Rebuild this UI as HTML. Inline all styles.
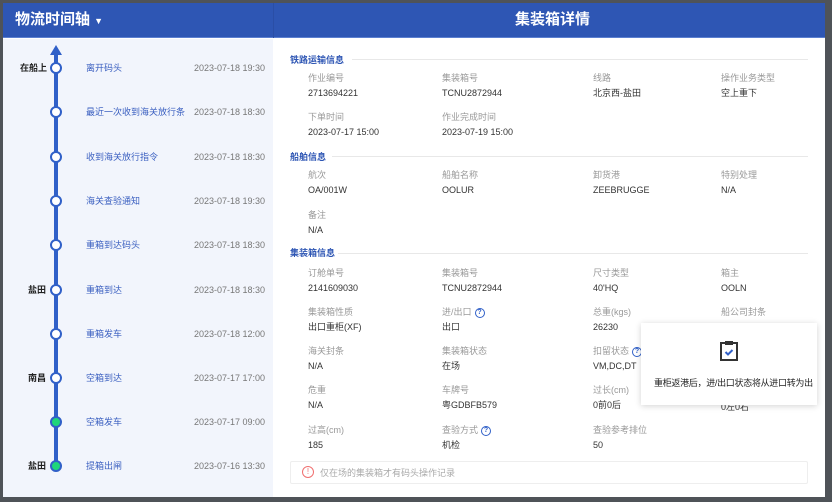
<!DOCTYPE html>
<html><head><meta charset="utf-8"><style>
*{margin:0;padding:0;box-sizing:border-box}
body{width:832px;height:502px;background:#4f5358;font-family:"Liberation Sans","Noto Sans CJK SC",sans-serif;position:relative;overflow:hidden}
.modal{position:absolute;left:3px;top:3px;width:822px;height:494px;background:#fff}
.hdr{position:absolute;left:0;top:0;width:822px;height:35px;background:#2e56b4;border-bottom:1px solid #5b7fd0}
.hdr .l{position:absolute;left:12px;top:8px;color:#fff;font-size:15px;font-weight:bold;line-height:18px}
.hdr .r{position:absolute;left:512px;top:8px;color:#fff;font-size:15px;font-weight:bold;line-height:18px}
.hdr .sep{position:absolute;left:270px;top:0;width:1px;height:35px;background:#2a4ea6}
.left{position:absolute;left:0;top:36px;width:270px;height:458px;background:#f2f5fc}
.abs{position:absolute;white-space:nowrap;line-height:12px}
.tl{font-size:9px;color:#3a5fc0}
.dt{font-size:9px;color:#777}
.pl{font-size:9px;color:#222;font-weight:bold}
.node{position:absolute;width:12px;height:12px;border-radius:50%;border:2px solid #3060c8;background:#fff}
.node.g{background:#1fd67a}
.sec{font-size:9px;color:#2e56b4;font-weight:bold}
.line{position:absolute;height:1px;background:#e8e8e8}
.lb{font-size:9px;color:#999}
.vl{font-size:9px;color:#333}
.q{display:inline-block;width:10px;height:10px;border:1.3px solid #3060c8;border-radius:50%;font-size:7px;line-height:8px;text-align:center;color:#3060c8;vertical-align:middle;margin-left:3px;font-weight:bold}
</style></head><body>
<div class="modal">
<div class="hdr"><div class="l">物流时间轴 <span style="font-size:9px">▼</span></div><div class="sep"></div><div class="r">集装箱详情</div></div>
<div class="left"></div>
</div>
<div class="abs" style="left:54px;top:52px;width:4px;height:414px;background:#3060c8"></div>
<div class="abs" style="left:50px;top:45px;width:0;height:0;border-left:6px solid transparent;border-right:6px solid transparent;border-bottom:10px solid #3060c8"></div>

<div class="node" style="left:50px;top:62px"></div>
<div class="node" style="left:50px;top:106px"></div>
<div class="node" style="left:50px;top:151px"></div>
<div class="node" style="left:50px;top:195px"></div>
<div class="node" style="left:50px;top:239px"></div>
<div class="node" style="left:50px;top:284px"></div>
<div class="node" style="left:50px;top:328px"></div>
<div class="node" style="left:50px;top:372px"></div>
<div class="node g" style="left:50px;top:416px"></div>
<div class="node g" style="left:50px;top:460px"></div>

<div class="abs pl" style="left:20px;top:62px">在船上</div>
<div class="abs pl" style="left:28px;top:284px">盐田</div>
<div class="abs pl" style="left:28px;top:372px">南昌</div>
<div class="abs pl" style="left:28px;top:460px">盐田</div>

<div class="abs tl" style="left:86px;top:62px">离开码头</div><div class="abs dt" style="left:194px;top:62px">2023-07-18 19:30</div>
<div class="abs tl" style="left:86px;top:106px">最近一次收到海关放行条</div><div class="abs dt" style="left:194px;top:106px">2023-07-18 18:30</div>
<div class="abs tl" style="left:86px;top:151px">收到海关放行指令</div><div class="abs dt" style="left:194px;top:151px">2023-07-18 18:30</div>
<div class="abs tl" style="left:86px;top:195px">海关查验通知</div><div class="abs dt" style="left:194px;top:195px">2023-07-18 19:30</div>
<div class="abs tl" style="left:86px;top:239px">重箱到达码头</div><div class="abs dt" style="left:194px;top:239px">2023-07-18 18:30</div>
<div class="abs tl" style="left:86px;top:284px">重箱到达</div><div class="abs dt" style="left:194px;top:284px">2023-07-18 18:30</div>
<div class="abs tl" style="left:86px;top:328px">重箱发车</div><div class="abs dt" style="left:194px;top:328px">2023-07-18 12:00</div>
<div class="abs tl" style="left:86px;top:372px">空箱到达</div><div class="abs dt" style="left:194px;top:372px">2023-07-17 17:00</div>
<div class="abs tl" style="left:86px;top:416px">空箱发车</div><div class="abs dt" style="left:194px;top:416px">2023-07-17 09:00</div>
<div class="abs tl" style="left:86px;top:460px">提箱出闸</div><div class="abs dt" style="left:194px;top:460px">2023-07-16 13:30</div>

<div class="abs sec" style="left:290px;top:54px">铁路运输信息</div><div class="line" style="left:352px;top:59px;width:456px"></div>
<div class="abs lb" style="left:308px;top:72px">作业编号</div><div class="abs vl" style="left:308px;top:87px">2713694221</div>
<div class="abs lb" style="left:442px;top:72px">集装箱号</div><div class="abs vl" style="left:442px;top:87px">TCNU2872944</div>
<div class="abs lb" style="left:593px;top:72px">线路</div><div class="abs vl" style="left:593px;top:87px">北京西-盐田</div>
<div class="abs lb" style="left:721px;top:72px">操作业务类型</div><div class="abs vl" style="left:721px;top:87px">空上重下</div>
<div class="abs lb" style="left:308px;top:111px">下单时间</div><div class="abs vl" style="left:308px;top:126px">2023-07-17 15:00</div>
<div class="abs lb" style="left:442px;top:111px">作业完成时间</div><div class="abs vl" style="left:442px;top:126px">2023-07-19 15:00</div>

<div class="abs sec" style="left:290px;top:151px">船舶信息</div><div class="line" style="left:332px;top:156px;width:476px"></div>
<div class="abs lb" style="left:308px;top:169px">航次</div><div class="abs vl" style="left:308px;top:184px">OA/001W</div>
<div class="abs lb" style="left:442px;top:169px">船舶名称</div><div class="abs vl" style="left:442px;top:184px">OOLUR</div>
<div class="abs lb" style="left:593px;top:169px">卸货港</div><div class="abs vl" style="left:593px;top:184px">ZEEBRUGGE</div>
<div class="abs lb" style="left:721px;top:169px">特别处理</div><div class="abs vl" style="left:721px;top:184px">N/A</div>
<div class="abs lb" style="left:308px;top:209px">备注</div><div class="abs vl" style="left:308px;top:224px">N/A</div>

<div class="abs sec" style="left:290px;top:247px">集装箱信息</div><div class="line" style="left:338px;top:253px;width:470px"></div>
<div class="abs lb" style="left:308px;top:267px">订舱单号</div><div class="abs vl" style="left:308px;top:282px">2141609030</div>
<div class="abs lb" style="left:442px;top:267px">集装箱号</div><div class="abs vl" style="left:442px;top:282px">TCNU2872944</div>
<div class="abs lb" style="left:593px;top:267px">尺寸类型</div><div class="abs vl" style="left:593px;top:282px">40'HQ</div>
<div class="abs lb" style="left:721px;top:267px">箱主</div><div class="abs vl" style="left:721px;top:282px">OOLN</div>

<div class="abs lb" style="left:308px;top:306px">集装箱性质</div><div class="abs vl" style="left:308px;top:321px">出口重柜(XF)</div>
<div class="abs lb" style="left:442px;top:306px">进/出口<span class="q">?</span></div><div class="abs vl" style="left:442px;top:321px">出口</div>
<div class="abs lb" style="left:593px;top:306px">总重(kgs)</div><div class="abs vl" style="left:593px;top:321px">26230</div>
<div class="abs lb" style="left:721px;top:306px">船公司封条</div>

<div class="abs lb" style="left:308px;top:345px">海关封条</div><div class="abs vl" style="left:308px;top:360px">N/A</div>
<div class="abs lb" style="left:442px;top:345px">集装箱状态</div><div class="abs vl" style="left:442px;top:360px">在场</div>
<div class="abs lb" style="left:593px;top:345px">扣留状态<span class="q">?</span></div><div class="abs vl" style="left:593px;top:360px">VM,DC,DT</div>

<div class="abs lb" style="left:308px;top:384px">危重</div><div class="abs vl" style="left:308px;top:399px">N/A</div>
<div class="abs lb" style="left:442px;top:384px">车牌号</div><div class="abs vl" style="left:442px;top:399px">粤GDBFB579</div>
<div class="abs lb" style="left:593px;top:384px">过长(cm)</div><div class="abs vl" style="left:593px;top:399px">0前0后</div>
<div class="abs vl" style="left:721px;top:401px">0左0右</div>

<div class="abs lb" style="left:308px;top:424px">过高(cm)</div><div class="abs vl" style="left:308px;top:439px">185</div>
<div class="abs lb" style="left:442px;top:424px">查验方式<span class="q">?</span></div><div class="abs vl" style="left:442px;top:439px">机检</div>
<div class="abs lb" style="left:593px;top:424px">查验参考排位</div><div class="abs vl" style="left:593px;top:439px">50</div>

<div class="abs" style="left:290px;top:461px;width:518px;height:23px;border:1px solid #eee;border-radius:2px"></div>
<div class="abs" style="left:302px;top:466px;width:12px;height:12px;border:1px solid #f07070;border-radius:50%;color:#f07070;font-size:8px;line-height:10px;text-align:center">!</div>
<div class="abs lb" style="left:320px;top:467px;color:#aaa">仅在场的集装箱才有码头操作记录</div>

<div class="abs" style="left:641px;top:323px;width:176px;height:82px;background:#fff;box-shadow:0 1px 6px rgba(0,0,0,.18)"></div>
<svg class="abs" style="left:719px;top:340px" width="20" height="22" viewBox="0 0 20 22"><rect x="2" y="3" width="16" height="17" fill="none" stroke="#333" stroke-width="2"/><rect x="6" y="1" width="8" height="4" fill="#333"/><path d="M6.5 12l2.5 2.5 4.5-4.5" fill="none" stroke="#3060c8" stroke-width="2"/></svg>
<div class="abs" style="left:654px;top:377px;font-size:9px;color:#222;letter-spacing:-0.3px">重柜返港后，进/出口状态将从进口转为出</div>
</body></html>
